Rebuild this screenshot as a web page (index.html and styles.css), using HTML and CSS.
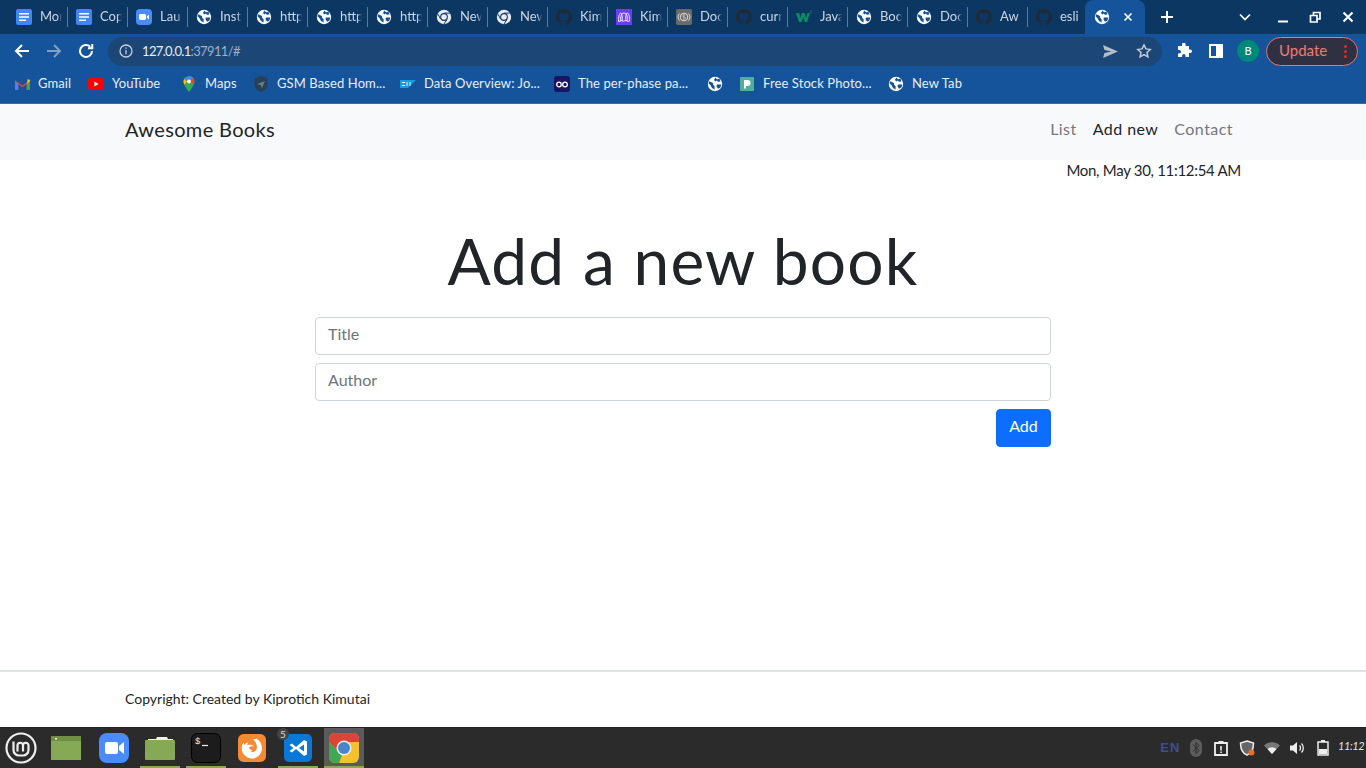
FILE: index.html
```html
<!DOCTYPE html>
<html lang="en">
<head>
  <meta charset="UTF-8">
  <meta name="viewport" content="width=device-width, initial-scale=1.0">
  <title>Awesome Books</title>
  <link rel="stylesheet" href="styles.css">
</head>
<body>

<svg class="defs" xmlns="http://www.w3.org/2000/svg">
  <symbol id="doc" viewBox="0 0 16 16">
    <rect width="16" height="16" rx="2" fill="#4285f4"/>
    <path d="M3 4h10v1.600H3zM3 7.200h10v1.600H3zM3 10.400h7V12H3z" fill="#fff"/>
  </symbol>
  <symbol id="zoom" viewBox="0 0 16 16">
    <rect width="16" height="16" rx="4" fill="#4a8cff"/>
    <rect x="3" y="5" width="7" height="6" rx="1.400" fill="#fff"/>
    <path d="M10.800 7.400 13 5.600v4.800l-2.200-1.800z" fill="#fff"/>
  </symbol>
  <symbol id="globe" viewBox="0 0 16 16">
    <circle cx="8" cy="8" r="7.200" fill="#fff"/>
    <path d="M2.200 5.200 6 7l.2 2 1.400 1v3.400L5 12 3.400 9 1.600 7.400zM8.400 1.600 10 3.200l2.600-.4.8 2.800-2.600.2-1-1.200-1.600.8-1.200-1.400zM10 8.400l4.400.2-1 3-2.400 1.200L9.400 10z" fill="#14539a"/>
  </symbol>
  <symbol id="chrome" viewBox="0 0 16 16">
    <circle cx="8" cy="8" r="7.200" fill="#e8ebef"/>
    <circle cx="8" cy="8" r="3.900" fill="#0e3a6b"/>
    <circle cx="8" cy="8" r="2.800" fill="#e8ebef"/>
    <path d="M8 4.100h6.400M4.600 10 1.600 4.600M10.900 10.600 8 15" stroke="#0e3a6b" stroke-width="1"/>
  </symbol>
  <symbol id="github" viewBox="0 0 16 16">
    <path fill="#1f2a36" d="M8 0C3.580 0 0 3.580 0 8c0 3.540 2.290 6.530 5.470 7.590.4.070.55-.17.55-.38v-1.340c-2.230.48-2.700-1.070-2.700-1.070-.36-.92-.89-1.170-.89-1.170-.73-.5.05-.49.05-.49.8.060 1.230.83 1.230.83.71 1.220 1.870.87 2.330.66.070-.52.28-.87.5-1.070-1.780-.2-3.640-.89-3.640-3.950 0-.87.31-1.590.82-2.150-.08-.2-.36-1.020.08-2.120 0 0 .67-.21 2.200.82a7.600 7.600 0 0 1 4 0c1.530-1.040 2.200-.82 2.200-.82.44 1.100.16 1.920.08 2.120.51.56.82 1.270.82 2.150 0 3.070-1.870 3.750-3.650 3.950.29.25.54.73.54 1.480v2.200c0 .21.15.46.55.38A8 8 0 0 0 16 8c0-4.420-3.580-8-8-8z"/>
  </symbol>
  <symbol id="miro" viewBox="0 0 16 16">
    <rect width="16" height="16" fill="#6d3df5"/>
    <path d="M2.500 12c0-4 1-8 2.300-8s2.200 8 .7 8-1.200-8 2.500-8 4 8 2.500 8-1-8 .7-8 2.300 4 2.300 8c-2 1-3 0-3.500-1-.5 1-3.500 2-4.500 0-.5 1-2 2-3.500 1z" fill="none" stroke="#fff" stroke-width=".9"/>
  </symbol>
  <symbol id="five" viewBox="0 0 16 16">
    <rect width="16" height="16" rx="2" fill="#6a6a6a"/>
    <circle cx="8" cy="8" r="3.800" fill="none" stroke="#ddd"/>
    <path d="M3.500 4.500a5 5 0 0 0 0 7M12.500 4.500a5 5 0 0 1 0 7" fill="none" stroke="#ddd"/>
    <path d="M9.300 6H7.200L7 8h1.400a1 1 0 0 1 0 2H7" fill="none" stroke="#ddd" stroke-width=".8"/>
  </symbol>
  <symbol id="w3" viewBox="0 0 16 16">
    <path d="M0 4h3l1.500 5L6 4h2.600l1.500 5 1.400-5h2.300l-2.700 9H9L7.300 8 5.600 13H3z" fill="#04915f"/>
    <path d="M14 1.500h1.600L14.800 3c.6 0 .8.500.5.900-.3.300-.9.300-1.300 0" fill="none" stroke="#04915f" stroke-width=".5"/>
  </symbol>
</svg>

<div class="tabstrip">
  <div class="tab"><svg class="fav"><use href="#doc"/></svg><span>Mor</span></div>
  <div class="tab"><svg class="fav"><use href="#doc"/></svg><span>Cop</span></div>
  <div class="tab"><svg class="fav"><use href="#zoom"/></svg><span>Lau</span></div>
  <div class="tab"><svg class="fav"><use href="#globe"/></svg><span>Inst</span></div>
  <div class="tab"><svg class="fav"><use href="#globe"/></svg><span>http</span></div>
  <div class="tab"><svg class="fav"><use href="#globe"/></svg><span>http</span></div>
  <div class="tab"><svg class="fav"><use href="#globe"/></svg><span>http</span></div>
  <div class="tab"><svg class="fav"><use href="#chrome"/></svg><span>New</span></div>
  <div class="tab"><svg class="fav"><use href="#chrome"/></svg><span>New</span></div>
  <div class="tab"><svg class="fav"><use href="#github"/></svg><span>Kim</span></div>
  <div class="tab"><svg class="fav"><use href="#miro"/></svg><span>Kim</span></div>
  <div class="tab"><svg class="fav"><use href="#five"/></svg><span>Doc</span></div>
  <div class="tab"><svg class="fav"><use href="#github"/></svg><span>curr</span></div>
  <div class="tab"><svg class="fav"><use href="#w3"/></svg><span>Java</span></div>
  <div class="tab"><svg class="fav"><use href="#globe"/></svg><span>Boo</span></div>
  <div class="tab"><svg class="fav"><use href="#globe"/></svg><span>Doc</span></div>
  <div class="tab"><svg class="fav"><use href="#github"/></svg><span>Aw</span></div>
  <div class="tab tab-last"><svg class="fav"><use href="#github"/></svg><span>esli</span></div>
  <div class="tab-active">
    <svg class="fav"><use href="#globe"/></svg>
    <svg class="tab-close" viewBox="0 0 10 10"><path d="M1.500 1.500l7 7M8.500 1.500l-7 7"/></svg>
  </div>
  <svg class="new-tab" viewBox="0 0 12 12"><path d="M6 0v12M0 6h12"/></svg>
  <div class="win-controls">
    <svg class="win-chevron" viewBox="0 0 12 8"><path d="M1 1.500l5 5 5-5"/></svg>
    <svg class="win-btn win-min" viewBox="0 0 12 12"><path d="M1 10.500h10"/></svg>
    <svg class="win-btn" viewBox="0 0 12 12"><path d="M1.500 4.500h6.500v6.500H1.500zM4.500 4V1.500h6.500v6.500H8.500" stroke-width="1.700"/></svg>
    <svg class="win-btn" viewBox="0 0 12 12"><path d="M1.500 1.500l9 9M10.500 1.500l-9 9"/></svg>
  </div>
</div>

<div class="toolbar">
  <svg class="nav-btn" viewBox="0 0 16 16"><path d="M15 8H2M8 2 2 8l6 6"/></svg>
  <svg class="nav-btn nav-off" viewBox="0 0 16 16"><path d="M1 8h13M8 2l6 6-6 6"/></svg>
  <svg class="nav-btn" viewBox="0 0 16 16"><path d="M14 8a6 6 0 1 1-1.800-4.300M14.300 1v4.300H10"/></svg>
  <div class="omnibox">
    <svg class="info" viewBox="0 0 14 14"><circle cx="7" cy="7" r="6"/><path d="M7 6v4.200M7 3.400v1.400"/></svg>
    <span class="url">127.0.0.1<em>:37911/#</em></span>
    <svg class="send" viewBox="0 0 16 14"><path d="M0 0l16 7-16 7 1.500-5.500L9 7 1.500 5.500z"/></svg>
    <svg class="star" viewBox="0 0 16 16"><path d="M8 1.800l1.900 4.100 4.400.5-3.300 3 .9 4.400L8 11.600l-3.900 2.200.9-4.400-3.300-3 4.400-.5z"/></svg>
  </div>
  <svg class="puzzle" viewBox="0 0 16 16"><path d="M6 1.500a1.800 1.800 0 0 1 3.600 0V3h3.400v3.500h1.200a1.800 1.800 0 0 1 0 3.600H13V14H9.500v-1.200a1.700 1.700 0 0 0-3.400 0V14H2v-3.500h1.200a1.800 1.800 0 0 0 0-3.600H2V3h4z"/></svg>
  <span class="side-panel"></span>
  <span class="avatar">B</span>
  <div class="update"><span>Update</span><span class="dots"><i></i><i></i><i></i></span></div>
</div>

<div class="bookmarks">
  <div class="bm">
    <svg class="fav-m" viewBox="0 0 16 12"><path d="M0 12V2l8 5.500L16 2v10h-3.500V6L8 9.500 3.500 6v6z" fill="#ea4335"/><path d="M0 12h3.500V6L0 3z" fill="#4285f4"/><path d="M12.500 12H16V3l-3.500 3z" fill="#34a853"/><path d="M12.500 6 16 3V1.500L13.500.800z" fill="#fbbc04"/></svg>
    <span>Gmail</span>
  </div>
  <div class="bm">
    <svg class="fav" viewBox="0 0 16 12"><rect width="16" height="12" rx="3" fill="#f00"/><path d="M6.400 3.500v5L10.500 6z" fill="#fff"/></svg>
    <span>YouTube</span>
  </div>
  <div class="bm">
    <svg class="fav" viewBox="0 0 16 16"><path d="M8 0a5.500 5.500 0 0 0-5.500 5.500C2.500 9.500 8 16 8 16s5.500-6.500 5.500-10.500A5.500 5.500 0 0 0 8 0z" fill="#34a853"/><path d="M3.200 3 8 0a5.500 5.500 0 0 1 4 1.700L8 5.500z" fill="#4285f4"/><path d="M2.500 5.500A5.500 5.500 0 0 1 3.200 3L6 5.500 3.500 9a8 8 0 0 1-1-3.500z" fill="#fbbc04"/><path d="M12 1.700a5.500 5.500 0 0 1 1.500 3.800c0 .8-.2 1.500-.5 2.200L8 5.500z" fill="#ea4335"/><circle cx="8" cy="5.500" r="2" fill="#fff"/></svg>
    <span>Maps</span>
  </div>
  <div class="bm">
    <svg class="fav" viewBox="0 0 16 16"><path d="M8 0l6.500 2.500V8c0 4-3 6.700-6.500 8-3.500-1.300-6.500-4-6.500-8V2.500z" fill="#2a3f52"/><path d="M4 8l8-3-3 7-1.500-3z" fill="#5d7f96"/></svg>
    <span>GSM Based Hom...</span>
  </div>
  <div class="bm">
    <svg class="fav" viewBox="0 0 16 8"><path d="M0 0h16L8 8H0z" fill="#1a9be0"/><path d="M2 2.500h3M2 5.500h3M7 2v4M10 2v4" stroke="#fff" stroke-width=".9"/></svg>
    <span>Data Overview: Jo...</span>
  </div>
  <div class="bm">
    <svg class="fav" viewBox="0 0 16 16"><rect width="16" height="16" rx="3" fill="#1a1464"/><circle cx="5" cy="8.500" r="2.300" fill="none" stroke="#fff" stroke-width="1.300"/><circle cx="11" cy="8.500" r="2.300" fill="none" stroke="#fff" stroke-width="1.300"/></svg>
    <span>The per-phase pa...</span>
  </div>
  <div class="bm"><svg class="fav"><use href="#globe"/></svg></div>
  <div class="bm">
    <svg class="fav" viewBox="0 0 16 16"><rect x="1" y="1" width="14" height="14" rx="1" fill="#4fb09a"/><path d="M5 4h3.500a3 3 0 0 1 0 6H7v2.500H5z" fill="#fff"/></svg>
    <span>Free Stock Photo...</span>
  </div>
  <div class="bm">
    <svg class="fav"><use href="#globe"/></svg>
    <span>New Tab</span>
  </div>
</div>

<nav class="navbar">
  <div class="container navbar-inner">
    <a class="brand" href="#">Awesome Books</a>
    <ul class="nav-links">
      <li><a href="#">List</a></li>
      <li><a class="active" href="#">Add new</a></li>
      <li><a href="#">Contact</a></li>
    </ul>
  </div>
</nav>

<main class="main-content">
  <div class="container">
    <p class="date">Mon, May 30, 11:12:54 AM</p>
    <h1>Add a new book</h1>
    <form class="book-form">
      <input type="text" placeholder="Title">
      <input type="text" placeholder="Author">
      <button type="button">Add</button>
    </form>
  </div>
</main>

<footer class="footer">
  <div class="container">Copyright: Created by <a href="#">Kiprotich Kimutai</a></div>
</footer>

<div class="taskbar">
  <div class="dock-item dock-mint">
    <svg viewBox="0 0 32 32" class="mint"><circle cx="16" cy="16" r="14.500"/><path d="M8.500 9.500V18a5.500 5.500 0 0 0 5.500 5.500h4a5.500 5.500 0 0 0 5.500-5.500v-4.500a2.750 2.750 0 0 0-5.500 0v6M12.500 19.500v-6a2.750 2.750 0 0 1 5.500 0"/></svg>
  </div>
  <div class="dock-item dock-first">
    <svg viewBox="0 0 30 24" class="dock-icon"><rect width="30" height="24" fill="#86a955"/><rect width="30" height="5" fill="#6f8f45"/><rect x="4" y="2" width="2" height="1.500" fill="#eee"/></svg>
  </div>
  <div class="dock-item">
    <svg viewBox="0 0 30 30" class="dock-icon dock-big"><rect width="30" height="30" rx="8" fill="#4a8cff"/><rect x="6" y="9" width="13" height="12" rx="2" fill="#fff"/><path d="M20 13l5-4v12l-5-4z" fill="#fff"/></svg>
  </div>
  <div class="dock-item running">
    <svg viewBox="0 0 30 24" class="dock-icon"><path d="M3 3h8l1-2h10l1 2h5v2H3z" fill="#eee"/><rect y="4" width="30" height="20" rx="1" fill="#86a955"/></svg>
  </div>
  <div class="dock-item running">
    <svg viewBox="0 0 30 30" class="dock-icon dock-big"><rect x=".5" y=".5" width="29" height="29" rx="6" fill="#1c1c1c" stroke="#000"/><path d="M11 12.500h6" stroke="#eee" stroke-width="1.200"/><text x="4" y="11" class="term-text">$</text></svg>
  </div>
  <div class="dock-item">
    <svg viewBox="0 0 30 30" class="dock-icon dock-fox"><rect width="30" height="30" rx="6" fill="#f58a35"/><path d="M20 5c5 3 7 9 5 14-2 6-8 8-12 7-5-1-9-5-9-11 0-3 1-5 2-6l1 3c1-2 2-3 4-3-1 1-1 2-1 3 3-1 6 0 7 1-2 0-5 0-5 2 0 1 1 2 3 2l-1 2c2 1 5 0 6-3 1-4-1-8-4-10z" fill="#fff"/></svg>
  </div>
  <div class="dock-item running">
    <svg viewBox="0 0 28 28" class="dock-icon dock-code"><rect width="28" height="28" rx="5" fill="#0a78d7"/><path d="M20 6l3 1.500v13L20 22l-8-7-4 3.500L5.500 17l4-3-4-3L8 9.500l4 3.500zm0 4.500L15 14l5 3.500z" fill="#fff"/></svg>
    <span class="dock-badge">5</span>
  </div>
  <div class="dock-item running dock-active">
    <svg viewBox="0 0 30 30" class="dock-icon dock-big"><rect width="30" height="30" rx="6" fill="#f3c22c"/><path d="M0 6a6 6 0 0 1 6-6h18a6 6 0 0 1 6 6v3H15l-6 9L0 9z" fill="#dc4437"/><path d="M0 9l9 9 4 4-3 8H6a6 6 0 0 1-6-6z" fill="#3fa756"/><circle cx="15" cy="15" r="7.500" fill="#eee"/><circle cx="15" cy="15" r="6" fill="#4a84c9"/></svg>
  </div>

  <div class="tray">
    <span class="tray-item tray-lang">EN</span>
    <span class="tray-item"><svg viewBox="0 0 12 18" class="tray-bt"><rect width="12" height="18" rx="6" fill="#5c5c5c"/><path d="M3 5.500l6 6-3 3v-11l3 3-6 6" fill="none" stroke="#2b2b2b"/></svg></span>
    <span class="tray-item"><svg viewBox="0 0 14 16" class="tray-ico"><path d="M1 3h12v12H1z" fill="none" stroke="#eee" stroke-width="1.800"/><path d="M4.500 1h5v3h-5zM6.200 6h1.600v4.500H6.200zM6.200 11.500h1.600v1.500H6.200z" fill="#eee"/></svg></span>
    <span class="tray-item"><svg viewBox="0 0 16 16" class="tray-ico"><path d="M8 1l6.500 2c0 5-1 10-6.500 12C2.500 13 1.500 8 1.500 3z" fill="#666" stroke="#eee" stroke-width="1.500"/><circle cx="12.500" cy="12.500" r="3" fill="#f26b21"/></svg></span>
    <span class="tray-item"><svg viewBox="0 0 16 12" class="tray-ico"><path d="M0 3.500a11.500 11.500 0 0 1 16 0l-8 8.500z" fill="#777"/><path d="M3.500 7a6.500 6.500 0 0 1 9 0L8 12z" fill="#eee"/></svg></span>
    <span class="tray-item"><svg viewBox="0 0 16 14" class="tray-ico"><path d="M0 4.500h3L7 1v12L3 9.500H0z" fill="#eee"/><path d="M9.500 4.500a3.500 3.500 0 0 1 0 5M11.500 2.500a6.500 6.500 0 0 1 0 9" fill="none" stroke="#eee" stroke-width="1.300"/></svg></span>
    <span class="tray-item"><svg viewBox="0 0 12 16" class="tray-ico"><path d="M4 0h4v2H4z" fill="#eee"/><rect x="1" y="2" width="10" height="13" fill="none" stroke="#eee" stroke-width="1.500"/><rect x="2" y="9" width="8" height="5" fill="#eee"/></svg></span>
    <span class="clock">11:12</span>
  </div>
</div>

</body>
</html>
```

FILE: styles.css
```css
* {
  box-sizing: border-box;
}
body {
  font-family: "Lato", sans-serif;
  font-size: 16px;
  line-height: 1.5;
  margin: 0;
  height: 100vh;
  overflow: hidden;
  display: flex;
  flex-direction: column;
  background: #fff;
  color: #212529;
}
.defs {
  display: none;
}
a {
  color: inherit;
  text-decoration: none;
}

/* pestañas */
.tabstrip {
  height: 34px;
  flex: none;
  display: flex;
  align-items: flex-start;
  padding-left: 8px;
  background: #0d3763;
  color: #ccd6e2;
  font-size: 13px;
}
.tab {
  width: 60px;
  height: 20px;
  margin-top: 7px;
  padding-left: 8px;
  display: flex;
  align-items: center;
  gap: 8px;
  border-right: 1px solid #5a7a9c;
}
.tab span {
  width: 22px;
  padding-bottom: 3px;
  overflow: hidden;
  white-space: nowrap;
  line-height: 16px;
  -webkit-mask-image: linear-gradient(to right, #000 78%, transparent);
  mask-image: linear-gradient(to right, #000 78%, transparent);
}
.tab-last {
  width: 57px;
  border-right: none;
}
.fav {
  width: 16px;
  height: 16px;
  flex: none;
}
.tab-active {
  width: 60px;
  height: 34px;
  padding: 0 0 0 9px;
  display: flex;
  align-items: center;
  gap: 13px;
  background: #15549b;
  border-radius: 8px 8px 0 0;
}
.tab-close {
  width: 10px;
  height: 10px;
  fill: none;
  stroke: #fff;
  stroke-width: 1.700;
}
.new-tab {
  width: 12px;
  height: 12px;
  margin: 11px 0 0 16px;
  fill: none;
  stroke: #fff;
  stroke-width: 2;
}
.win-controls {
  margin-left: auto;
  display: flex;
  align-items: center;
  height: 34px;
  padding-right: 12px;
  gap: 21px;
}
.win-chevron {
  width: 12px;
  height: 8px;
  margin-right: 5px;
  fill: none;
  stroke: #fff;
  stroke-width: 1.700;
}
.win-btn {
  width: 12px;
  height: 12px;
  fill: none;
  stroke: #fff;
  stroke-width: 2;
}
.win-min {
  margin-right: -1px;
}

/* barra de direcciones */
.toolbar {
  height: 34px;
  flex: none;
  display: flex;
  align-items: center;
  padding-left: 14px;
  background: #15549b;
}
.nav-btn {
  width: 16px;
  height: 16px;
  margin-right: 16px;
  fill: none;
  stroke: #fff;
  stroke-width: 2;
}
.nav-off {
  stroke: #7f9fc5;
}
.omnibox {
  width: 1054px;
  height: 29px;
  margin-left: -2px;
  padding: 0 10px 0 11px;
  display: flex;
  align-items: center;
  background: #1c4676;
  border-radius: 15px;
  font-size: 13px;
  letter-spacing: -.65px;
  color: #e8edf3;
}
.info {
  width: 14px;
  height: 14px;
  margin-right: 9px;
  fill: none;
  stroke: #c7d0da;
  stroke-width: 1.300;
}
.url {
  padding-top: 1px;
}
.url em {
  font-style: normal;
  color: #9fb1c6;
}
.send {
  width: 15px;
  height: 13px;
  margin-left: auto;
  fill: #b4bfcb;
}
.star {
  width: 16px;
  height: 16px;
  margin-left: 18px;
  fill: none;
  stroke: #c7d0da;
  stroke-width: 1.400;
}
.puzzle {
  width: 16px;
  height: 16px;
  margin-left: 14px;
  fill: #fff;
}
.side-panel {
  width: 14px;
  height: 14px;
  margin-left: 17px;
  border: 2px solid #fff;
  border-right-width: 7px;
}
.avatar {
  width: 22px;
  height: 22px;
  margin-left: 14px;
  border-radius: 50%;
  background: #00897b;
  color: #fff;
  font-size: 11px;
  line-height: 22px;
  text-align: center;
}
.update {
  width: 92px;
  height: 29px;
  margin-left: 7px;
  padding: 0 0 2px 12px;
  display: flex;
  align-items: center;
  background: #2f3142;
  border: 1px solid #e8776d;
  border-radius: 15px;
  color: #f07a70;
  font-size: 15px;
}
.dots {
  margin: 2px 0 0 17px;
  display: flex;
  flex-direction: column;
  gap: 2px;
}
.dots i {
  width: 3px;
  height: 3px;
  border-radius: 50%;
  background: #d93025;
}

/* marcadores */
.bookmarks {
  height: 36px;
  flex: none;
  display: flex;
  align-items: center;
  padding: 0 0 3px 15px;
  background: #15549b;
  border-bottom: 1px solid #3a6ba5;
  color: #e8edf3;
  font-size: 13px;
  letter-spacing: .1px;
}
.bm {
  display: flex;
  align-items: center;
  gap: 8px;
  white-space: nowrap;
}
.bm:nth-child(1) { width: 73px; }
.bm:nth-child(2) { width: 93px; }
.bm:nth-child(3) { width: 72px; }
.bm:nth-child(4) { width: 147px; }
.bm:nth-child(5) { width: 154px; }
.bm:nth-child(6) { width: 153px; }
.bm:nth-child(7) { width: 32px; }
.bm:nth-child(8) { width: 149px; }
.fav-m {
  width: 15px;
  height: 12px;
}

/* pagina */
.container {
  width: 1140px;
  margin: 0 auto;
  padding: 0 12px;
}
.navbar {
  height: 56px;
  flex: none;
  background: #f8f9fa;
}
.navbar-inner {
  height: 56px;
  padding-bottom: 6px;
  display: flex;
  align-items: center;
  justify-content: space-between;
}
.brand {
  font-size: 20px;
  letter-spacing: .35px;
}
.nav-links {
  display: flex;
  gap: 16px;
  margin: 0;
  padding: 0 8px 0 0;
  list-style: none;
  color: #74777a;
  letter-spacing: .45px;
}
.nav-links .active {
  color: #212529;
}
.main-content {
  flex: 1;
}
.date {
  margin: 0;
  font-size: 15px;
  line-height: 20px;
  letter-spacing: -.3px;
  text-align: right;
}
h1 {
  margin: 43px 0 17px;
  font-size: 64px;
  font-weight: 400;
  line-height: 1.2;
  letter-spacing: 1.2px;
  text-align: center;
}
.book-form {
  width: 736px;
  margin: 0 auto;
  display: flex;
  flex-direction: column;
  gap: 8px;
}
.book-form input {
  height: 38px;
  padding: 3px 12px 7px;
  border: 1px solid #ced4da;
  border-radius: 4px;
  font: inherit;
  color: #212529;
}
.book-form input::placeholder {
  color: #6c757d;
}
.book-form button {
  align-self: flex-end;
  width: 55px;
  height: 38px;
  padding: 0 0 4px;
  border: 1px solid #0d6efd;
  border-radius: 4px;
  background: #0d6efd;
  color: #fff;
  font: inherit;
}
.footer {
  height: 57px;
  flex: none;
  padding-top: 16px;
  border-top: 2px solid #dee2e6;
  font-size: 14px;
}

/* panel */
.taskbar {
  height: 41px;
  flex: none;
  display: flex;
  background: #2b2b2b;
  border-top: 1px solid #222;
}
.dock-item {
  position: relative;
  width: 46px;
  height: 40px;
  display: flex;
  align-items: center;
  justify-content: center;
}
.dock-mint {
  width: 42px;
}
.dock-first {
  margin: 0 2px 0 1px;
}
.mint {
  width: 32px;
  height: 32px;
  fill: none;
  stroke: #eee;
  stroke-width: 2.200;
}
.dock-icon {
  width: 30px;
  height: 24px;
}
.dock-big {
  height: 30px;
}
.dock-fox {
  width: 28px;
  height: 28px;
}
.dock-code {
  width: 28px;
  height: 28px;
}
.term-text {
  font-family: "Liberation Mono", monospace;
  font-size: 9px;
  fill: #eee;
}
.running::after {
  content: "";
  position: absolute;
  left: 3px;
  right: 3px;
  bottom: 0;
  height: 2px;
  background: #86a955;
}
.dock-active {
  width: 40px;
  margin-left: 3px;
  background: #5a5a5a;
}
.dock-active::after {
  left: 0;
  right: 0;
}
.dock-badge {
  position: absolute;
  top: 0;
  left: 2px;
  width: 12px;
  height: 12px;
  border-radius: 50%;
  background: #444;
  color: #ddd;
  font-size: 10px;
  line-height: 12px;
  text-align: center;
}
.tray {
  margin-left: auto;
  padding-right: 4px;
  display: flex;
  align-items: center;
}
.tray-item {
  width: 25.500px;
  display: flex;
  justify-content: center;
}
.tray-lang {
  color: #3f4d94;
  font-family: "Liberation Sans", sans-serif;
  font-size: 13px;
  font-weight: 700;
  letter-spacing: 1px;
}
.tray-bt {
  width: 12px;
  height: 18px;
}
.tray-ico {
  width: 16px;
  height: 16px;
}
.clock {
  width: 24px;
  margin-left: 2px;
  padding-bottom: 4px;
  color: #dde6f5;
  font-size: 11px;
  font-style: italic;
  letter-spacing: -.4px;
  text-align: center;
}
```
